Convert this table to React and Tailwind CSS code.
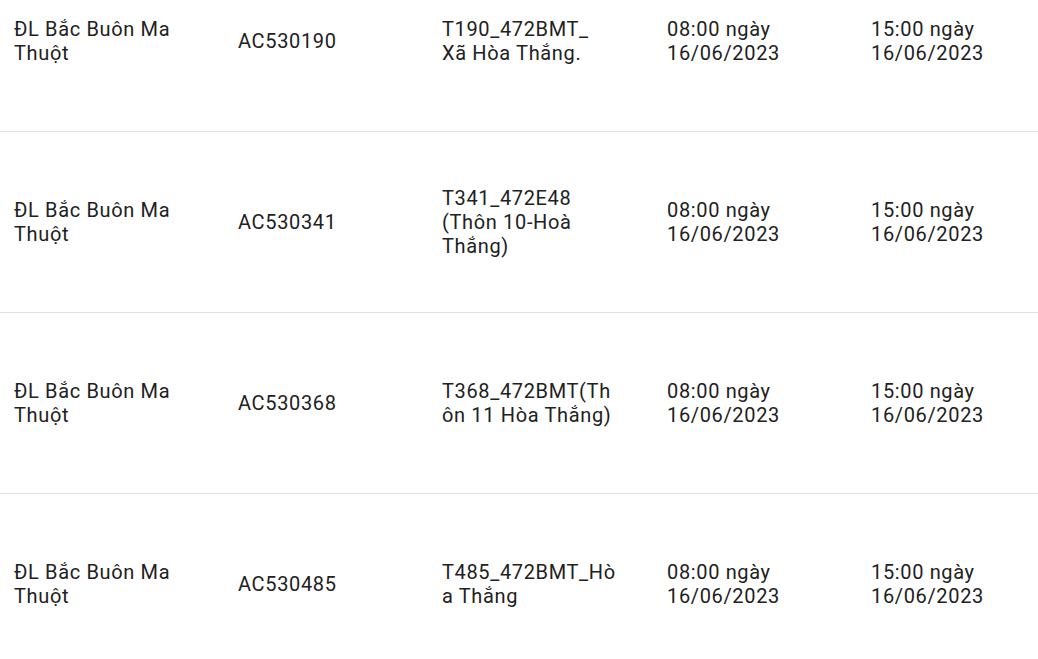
const rows = [
  {
    unit: ["ĐL Bắc Buôn Ma", "Thuột"],
    code: "AC530190",
    station: ["T190_472BMT_", "Xã Hòa Thắng."],
  },
  {
    unit: ["ĐL Bắc Buôn Ma", "Thuột"],
    code: "AC530341",
    station: ["T341_472E48", "(Thôn 10-Hoà", "Thắng)"],
  },
  {
    unit: ["ĐL Bắc Buôn Ma", "Thuột"],
    code: "AC530368",
    station: ["T368_472BMT(Th", "ôn 11 Hòa Thắng)"],
  },
  {
    unit: ["ĐL Bắc Buôn Ma", "Thuột"],
    code: "AC530485",
    station: ["T485_472BMT_Hò", "a Thắng"],
  },
];

const Lines = ({ lines }) => (
  <div>
    {lines.map((l, i) => (
      <div key={i}>{l}</div>
    ))}
  </div>
);

export default function App() {
  return (
    <div
      className="min-h-screen overflow-hidden bg-white text-[#212121] text-[20px] leading-[24px] tracking-[0.65px]"
      style={{ fontFamily: "Roboto, 'Liberation Sans', sans-serif" }}
    >
      <div className="-mt-[49px]">
        {rows.map((r, i) => (
          <div
            key={i}
            className="grid grid-cols-[224px_204px_225px_204px_1fr] h-[181px] items-center border-b border-[#e0e0e0]"
          >
            <div className="px-[14px]">
              <Lines lines={r.unit} />
            </div>
            <div className="px-[14px]">{r.code}</div>
            <div className="px-[14px]">
              <Lines lines={r.station} />
            </div>
            <div className="px-[14px]">
              <Lines lines={["08:00 ngày", "16/06/2023"]} />
            </div>
            <div className="px-[14px]">
              <Lines lines={["15:00 ngày", "16/06/2023"]} />
            </div>
          </div>
        ))}
      </div>
    </div>
  );
}
